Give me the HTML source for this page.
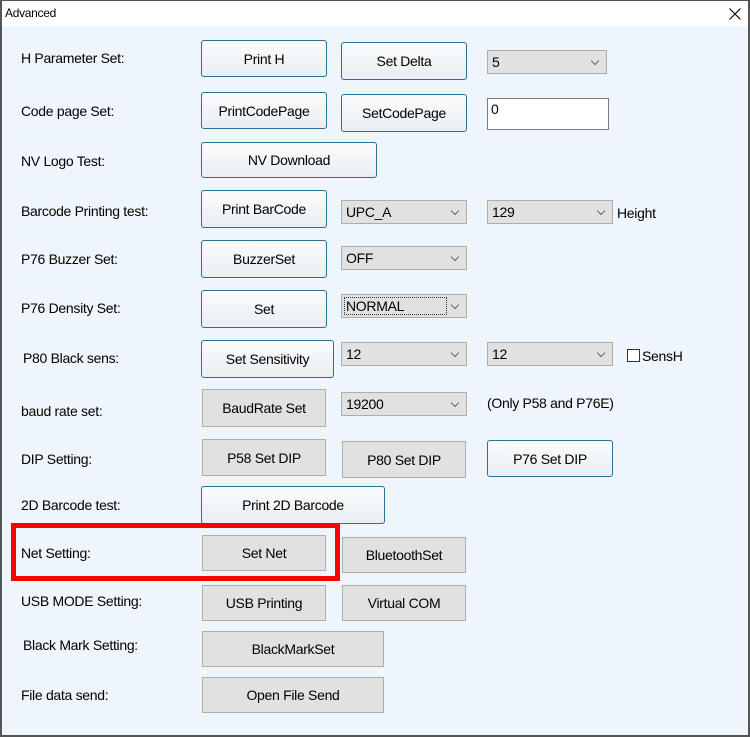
<!DOCTYPE html>
<html><head><meta charset="utf-8"><style>
*{box-sizing:border-box;margin:0;padding:0}
body{width:750px;height:737px;position:relative;overflow:hidden;background:#eef6fc;font-family:"Liberation Sans",sans-serif;font-size:14px;color:#000;letter-spacing:-0.3px}
.win{position:absolute;left:0;top:0;width:750px;height:737px;border:1px solid #555;border-left:2px solid #555;border-right:2px solid #555;border-bottom:2px solid #555}
.title{position:absolute;left:2px;top:1px;width:746px;height:25px;background:#fff}
.title span{position:absolute;left:3px;top:5px;font-size:12px}
.a{position:absolute;white-space:nowrap}
.b{position:absolute;display:flex;align-items:center;justify-content:center;white-space:nowrap}
.s{border:1px solid #2d6e95;border-radius:3px;background:linear-gradient(#fbfcfd,#e9eef2)}
.g{border:1px solid #adadad;background:#e1e1e1}
.c{position:absolute;border:1px solid #adadad;background:#e1e1e1;padding-left:4px;line-height:22px}
.c:after{content:"";position:absolute;right:8px;top:7px;width:5px;height:5px;border-right:1px solid #666;border-bottom:1px solid #666;transform:rotate(45deg)}
</style></head><body>
<div class="win"></div>
<div class="title"><span>Advanced</span>
<svg style="position:absolute;left:727px;top:7px" width="12" height="12"><path d="M0.5 0.5L11.5 11.5M11.5 0.5L0.5 11.5" stroke="#000" stroke-width="1.1"/></svg></div>

<div class="a" style="left:21px;top:50px">H Parameter Set:</div>
<div class="a" style="left:21px;top:103px">Code page Set:</div>
<div class="a" style="left:21px;top:153px">NV Logo Test:</div>
<div class="a" style="left:21px;top:203px">Barcode Printing test:</div>
<div class="a" style="left:21px;top:251px">P76 Buzzer Set:</div>
<div class="a" style="left:21px;top:300px">P76 Density Set:</div>
<div class="a" style="left:23px;top:350px">P80 Black sens:</div>
<div class="a" style="left:21px;top:403px">baud rate set:</div>
<div class="a" style="left:21px;top:451px">DIP Setting:</div>
<div class="a" style="left:21px;top:497px">2D Barcode test:</div>
<div class="a" style="left:21px;top:545px">Net Setting:</div>
<div class="a" style="left:21px;top:593px">USB MODE Setting:</div>
<div class="a" style="left:23px;top:637px">Black Mark Setting:</div>
<div class="a" style="left:21px;top:687px">File data send:</div>

<div class="b s" style="left:201px;top:40px;width:126px;height:37px">Print H</div>
<div class="b s" style="left:341px;top:42px;width:126px;height:38px">Set Delta</div>
<div class="c" style="left:487px;top:50px;width:120px;height:24px">5</div>

<div class="b s" style="left:201px;top:92px;width:126px;height:37px">PrintCodePage</div>
<div class="b s" style="left:341px;top:94px;width:126px;height:38px">SetCodePage</div>
<div class="a" style="left:487px;top:98px;width:122px;height:32px;background:#fff;border:1px solid #7a7a7a;padding:2px 0 0 3px">0</div>

<div class="b s" style="left:201px;top:142px;width:176px;height:36px">NV Download</div>

<div class="b s" style="left:201px;top:190px;width:126px;height:38px">Print BarCode</div>
<div class="c" style="left:341px;top:200px;width:126px;height:24px">UPC_A</div>
<div class="c" style="left:487px;top:200px;width:126px;height:24px">129</div>
<div class="a" style="left:617px;top:205px">Height</div>

<div class="b s" style="left:201px;top:240px;width:126px;height:38px">BuzzerSet</div>
<div class="c" style="left:341px;top:246px;width:126px;height:24px">OFF</div>

<div class="b s" style="left:201px;top:290px;width:126px;height:38px">Set</div>
<div class="c" style="left:341px;top:294px;width:126px;height:24px"><span style="position:absolute;left:2px;top:2px;width:103px;height:18px;border:1px dotted #333"></span>NORMAL</div>

<div class="b s" style="left:201px;top:340px;width:133px;height:38px">Set Sensitivity</div>
<div class="c" style="left:341px;top:342px;width:126px;height:24px">12</div>
<div class="c" style="left:487px;top:342px;width:126px;height:24px">12</div>
<div class="a" style="left:627px;top:349px;width:13px;height:13px;border:1px solid #333;background:#fff"></div>
<div class="a" style="left:642px;top:348px">SensH</div>

<div class="b g" style="left:202px;top:389px;width:124px;height:38px">BaudRate Set</div>
<div class="c" style="left:341px;top:392px;width:126px;height:24px">19200</div>
<div class="a" style="left:487px;top:395px">(Only P58 and P76E)</div>

<div class="b g" style="left:202px;top:439px;width:124px;height:37px">P58 Set DIP</div>
<div class="b g" style="left:342px;top:441px;width:124px;height:37px">P80 Set DIP</div>
<div class="b s" style="left:487px;top:440px;width:126px;height:37px">P76 Set DIP</div>

<div class="b s" style="left:201px;top:486px;width:184px;height:38px">Print 2D Barcode</div>

<div class="b g" style="left:202px;top:535px;width:124px;height:36px">Set Net</div>
<div class="b g" style="left:342px;top:537px;width:124px;height:36px">BluetoothSet</div>
<div class="a" style="left:11px;top:523px;width:329px;height:58px;border:5px solid #f00"></div>

<div class="b g" style="left:202px;top:585px;width:124px;height:36px">USB Printing</div>
<div class="b g" style="left:342px;top:585px;width:124px;height:36px">Virtual COM</div>

<div class="b g" style="left:202px;top:631px;width:182px;height:36px">BlackMarkSet</div>
<div class="b g" style="left:202px;top:677px;width:182px;height:36px">Open File Send</div>
</body></html>
